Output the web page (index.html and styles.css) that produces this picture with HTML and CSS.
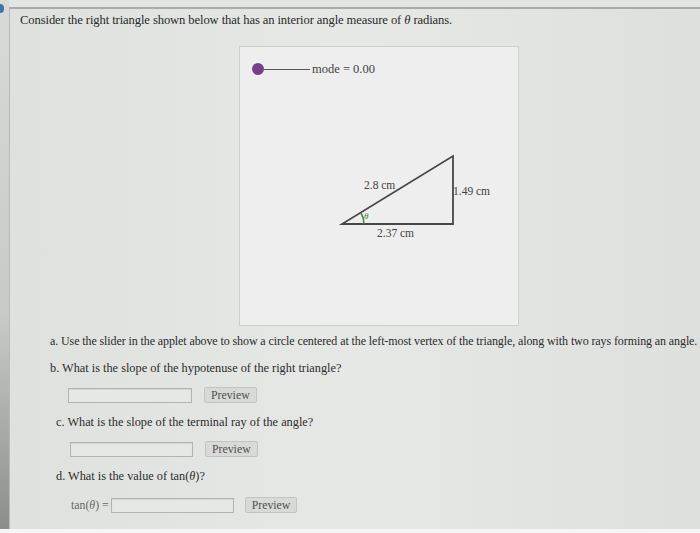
FILE: index.html
```html
<!DOCTYPE html>
<html>
<head>
<meta charset="utf-8">
<link rel="stylesheet" href="styles.css">
</head>
<body>
<div class="screen">
  <div class="edge"><span class="marker"></span></div>
  <div class="page">
    <p class="intro">Consider the right triangle shown below that has an interior angle measure of <i>θ</i> radians.</p>
    <div class="applet">
      <div class="slider">
        <span class="knob"></span><span class="track"></span><span class="mode">mode = 0.00</span>
      </div>
      <svg class="tri" width="180" height="100" viewBox="0 0 180 100">
        <path d="M13,82 L124,82 L124,14 Z" fill="none" stroke="#474747" stroke-width="1.8" stroke-linejoin="miter"/>
        <path d="M35,82 A 22 22 0 0 0 32,71" fill="none" stroke="#4a8048" stroke-width="1.5"/>
        <text x="35" y="47" class="lbl">2.8 cm</text>
        <text x="124" y="53" class="lbl">1.49 cm</text>
        <text x="48" y="95" class="lbl">2.37 cm</text>
        <text x="35" y="77" class="th">θ</text>
      </svg>
    </div>
    <p class="q qa">a. Use the slider in the applet above to show a circle centered at the left-most vertex of the triangle, along with two rays forming an angle.</p>
    <p class="q qb">b. What is the slope of the hypotenuse of the right triangle?</p>
    <div class="row r1"><span class="field f1"></span><span class="btn">Preview</span></div>
    <p class="q qc">c. What is the slope of the terminal ray of the angle?</p>
    <div class="row r2"><span class="field f2"></span><span class="btn">Preview</span></div>
    <p class="q qd">d. What is the value of tan(<i>θ</i>)?</p>
    <div class="row r3"><span class="tan">tan(<i>θ</i>) =</span><span class="field f3"></span><span class="btn">Preview</span></div>
  </div>
</div>
<div class="bottom"></div>
</body>
</html>
```
FILE: styles.css
```css
html, body { margin: 0; padding: 0; }
body {
  width: 700px;
  height: 533px;
  overflow: hidden;
  background: #e3e5e3;
  font-family: "Liberation Serif", "Times New Roman", serif;
  color: #333;
}
.screen { display: flex; height: 529px; }
.edge {
  flex: 0 0 9px;
  width: 9px;
  background: linear-gradient(#d8dad8, #c8cac8 60%, #8c8e8c);
  position: relative;
}
.marker {
  position: absolute; left: 0; top: 4px;
  width: 4px; height: 9px;
  background: #3f74a8;
  border-radius: 0 4px 4px 0;
}
.page {
  flex: 1 1 auto;
  min-width: 0;
  overflow: hidden;
  margin-top: 7px;
  border-top: 2px solid #a9abaa;
  border-left: 1px solid #b8bab8;
  background: linear-gradient(90deg, #dfe1df, #e6e8e6 50%, #dee0de);
  padding-left: 10px;
}
p { margin: 0; }
.intro {
  font-size: 12.6px;
  line-height: 15px;
  margin-top: 4px;
  letter-spacing: -0.1px;
  color: #2a2a2a;
}
.applet {
  margin: 18px 0 0 219px;
  width: 278px;
  height: 278px;
  background: #edeeed;
  border: 1px solid #cdcfcd;
}
.slider {
  display: flex; align-items: center;
  margin: 15px 0 0 12px;
  height: 14px;
}
.knob {
  width: 12px; height: 12px; border-radius: 50%;
  background: #7a3d8c;
}
.track { width: 46px; height: 1px; background: #555; }
.mode { font-size: 12.5px; color: #444; margin-left: 2px; }
.tri { display: block; margin: 66px 0 0 89px; overflow: visible; }
.lbl { font-family: "Liberation Serif", serif; font-size: 11.5px; fill: #444; }
.th { font-family: "Liberation Serif", serif; font-size: 9px; font-style: italic; fill: #4a8048; }
.q {
  font-size: 12.3px;
  line-height: 14px;
  white-space: nowrap;
  color: #2c2c2c;
}
.qa { margin: 8px 0 0 30px; font-size: 12px; letter-spacing: -0.1px; }
.qb { margin: 13px 0 0 30px; }
.row { display: flex; align-items: center; height: 16px; }
.r1 { margin: 12px 0 0 48px; }
.qc { margin: 12px 0 0 36px; }
.r2 { margin: 12px 0 0 50px; }
.qd { margin: 12px 0 0 36px; }
.r3 { margin: 14px 0 0 51px; }
.field {
  height: 13px;
  background: #e6e8e6;
  border: 1px solid #b2b4b2;
  box-shadow: inset 0 1px 1px rgba(0,0,0,0.08);
}
.f1 { width: 122px; }
.f2 { width: 121px; }
.f3 { width: 121px; }
.btn {
  font-size: 11.8px;
  color: #505050;
  background: #d8dad8;
  border: 1px solid #c2c4c2;
  border-radius: 2px;
  padding: 0 6px;
  margin-left: 12px;
  line-height: 14px;
}
.r3 .btn { margin-left: 11px; }
.tan { font-size: 11.8px; color: #666; margin-right: 2px; }
.bottom { height: 4px; background: #f4f5f4; }
```
